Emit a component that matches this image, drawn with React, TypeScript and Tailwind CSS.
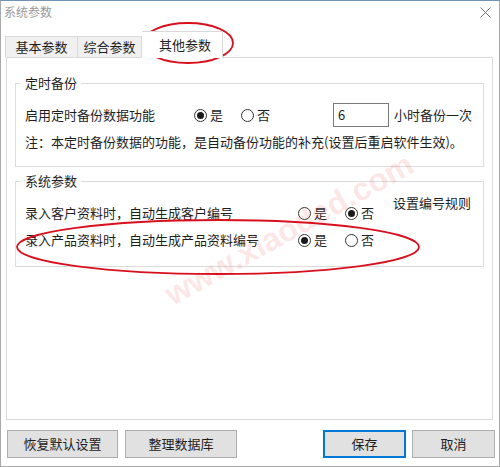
import React from 'react';

const Radio = ({ checked, label, className }: { checked?: boolean; label: string; className?: string }) => {
  return (
    <div className={`flex items-center gap-[3px] ${className ?? ''}`}>
      <span className="flex items-center justify-center w-[13px] h-[13px] rounded-full border border-[#333] bg-white">
        {checked && <span className="w-[7px] h-[7px] rounded-full bg-[#1a1a1a]" />}
      </span>
      <span>{label}</span>
    </div>
  );
};

const GroupBox = ({ title, className, children }: { title: string; className?: string; children: React.ReactNode }) => {
  return (
    <div className={`relative border border-[#dcdcdc] ${className ?? ''}`}>
      <span className="absolute left-[5px] top-[-10px] px-[4px] bg-white leading-[18px]">{title}</span>
      {children}
    </div>
  );
};

const App = () => {
  return (
    <div className="relative w-[500px] h-[467px] bg-white border-x border-b border-[#a9a9a9] border-t border-t-[#7393b5] text-[13px] leading-[20px] text-[#1e1e1e] font-['Noto_Sans_CJK_SC',sans-serif] overflow-hidden">
      {/* title bar */}
      <div className="flex items-center justify-between h-[30px] pb-[8px] pl-[3px] pr-[8px]">
        <span className="text-[12px] text-[#9a9a9a]">系统参数</span>
        <svg width="11" height="11" viewBox="0 0 11 11">
          <path d="M0.5 0.5 L10.5 10.5 M10.5 0.5 L0.5 10.5" stroke="#777" strokeWidth="1" />
        </svg>
      </div>

      {/* tabs */}
      <div className="flex items-end h-[26px] pl-[4px]">
        <div className="flex items-center justify-center w-[73px] h-[21px] border border-b-0 border-[#d9d9d9] bg-[#f0f0f0]">基本参数</div>
        <div className="flex items-center justify-center w-[64px] h-[21px] border border-l-0 border-b-0 border-[#d9d9d9] bg-[#f0f0f0]">综合参数</div>
        <div className="relative z-10 flex items-center justify-center w-[81px] h-[27px] -mb-px pl-[6px] border border-l-0 border-b-0 border-[#d9d9d9] bg-white">其他参数</div>
      </div>

      {/* tab panel */}
      <div className="ml-[5px] w-[487px] h-[363px] border border-[#d9d9d9] pt-[25px] pl-[8px]">
        <GroupBox title="定时备份" className="w-[469px] h-[84px]">
          <div className="pt-[21px] pl-[9px]">
            <div className="flex items-center h-[20px]">
              <span className="w-[169px]">启用定时备份数据功能</span>
              <Radio checked label="是" className="w-[47px]" />
              <Radio label="否" className="w-[92px]" />
              <div className="w-[56px] h-[24px] border border-[#7a7a7a] pl-[4px] leading-[22px]">6</div>
              <span className="ml-[5px]">小时备份一次</span>
            </div>
            <div className="mt-[7px] h-[20px]">注：本定时备份数据的功能，是自动备份功能的补充(设置后重启软件生效)。</div>
          </div>
        </GroupBox>

        <GroupBox title="系统参数" className="mt-[14px] w-[469px] h-[86px]">
          <div className="flex pl-[9px]">
            <div className="w-[368px] pt-[21px]">
              <div className="flex items-center h-[20px]">
                <span className="w-[273px]">录入客户资料时，自动生成客户编号</span>
                <Radio label="是" className="w-[47px]" />
                <Radio checked label="否" />
              </div>
              <div className="flex items-center h-[20px] mt-[7px]">
                <span className="w-[273px]">录入产品资料时，自动生成产品资料编号</span>
                <Radio checked label="是" className="w-[47px]" />
                <Radio label="否" />
              </div>
            </div>
            <div className="pt-[11px]">设置编号规则</div>
          </div>
        </GroupBox>
      </div>

      {/* buttons */}
      <div className="flex justify-between mt-[10px] pl-[6px] pr-[4px]">
        <div className="flex gap-[7px]">
          <button className="w-[111px] h-[28px] border border-[#adadad] bg-[#e1e1e1]">恢复默认设置</button>
          <button className="w-[112px] h-[28px] border border-[#adadad] bg-[#e1e1e1]">整理数据库</button>
        </div>
        <div className="flex gap-[6px]">
          <button className="w-[83px] h-[28px] border-2 border-[#0078d7] bg-[#e1e1e1]">保存</button>
          <button className="w-[83px] h-[28px] border border-[#adadad] bg-[#e1e1e1]">取消</button>
        </div>
      </div>

      {/* watermark */}
      <span className="pointer-events-none absolute left-[288px] top-[228px] -translate-x-1/2 -translate-y-1/2 -rotate-[29deg] whitespace-nowrap text-[32px] leading-none font-bold font-['Liberation_Sans',sans-serif] text-[rgba(235,70,70,0.15)]">
        www.xiaoded.com
      </span>

      {/* annotation ellipses */}
      <svg className="pointer-events-none absolute left-0 top-0" width="500" height="467" viewBox="0 0 500 467">
        <ellipse cx="187" cy="42" rx="45" ry="20" fill="none" stroke="#d8101e" strokeWidth="1.8" />
        <ellipse cx="217" cy="246" rx="201" ry="27" fill="none" stroke="#d8101e" strokeWidth="1.8" />
      </svg>
    </div>
  );
};

export default App;
